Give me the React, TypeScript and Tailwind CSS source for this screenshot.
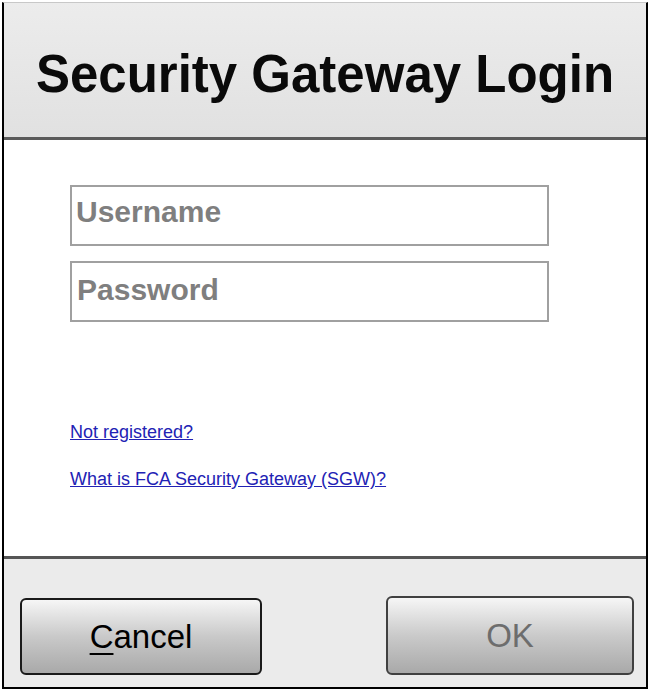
import React, { useState } from "react";

export default function App() {
  const [username, setUsername] = useState("");
  const [password, setPassword] = useState("");

  return (
    <div className="w-[650px] h-[691px] bg-white p-[2px] font-['Liberation_Sans',Arial,sans-serif]">
      <div className="flex flex-col h-full border-l-2 border-r-2 border-b-2 border-t border-l-black border-r-black border-b-black border-t-[#c8c8c8]">
        <div className="h-[137px] flex items-center justify-center bg-gradient-to-b from-[#ececec] to-[#e1e1e1] border-b-[3px] border-[#5a5a5a]">
          <h1 className="text-[51px] font-bold text-[#0a0a0a] leading-none mt-[6px] scale-y-[1.06]">
            Security Gateway Login
          </h1>
        </div>

        <div className="h-[419px] bg-white pt-[45px] pl-[66px] border-b-[3px] border-[#555]">
          <div className="flex flex-col gap-[15px] w-[479px]">
            <input
              type="text"
              placeholder="Username"
              value={username}
              onChange={(e) => setUsername(e.target.value)}
              className="h-[61px] border-2 border-[#a0a0a0] px-[4px] pb-[8px] text-[30px] font-bold text-[#555] placeholder:text-[#7f7f7f] outline-none"
            />
            <input
              type="password"
              placeholder="Password"
              value={password}
              onChange={(e) => setPassword(e.target.value)}
              className="h-[61px] border-2 border-[#a0a0a0] px-[5px] pb-[4px] text-[30px] font-bold text-[#555] placeholder:text-[#7f7f7f] outline-none"
            />
          </div>
          <div className="flex flex-col items-start gap-[27px] mt-[100px] text-[18px] leading-[20px] text-[#2222b4]">
            <a href="#" className="underline">
              Not registered?
            </a>
            <a href="#" className="underline">
              What is FCA Security Gateway (SGW)?
            </a>
          </div>
        </div>

        <div className="flex-1 bg-[#ebebeb] flex items-start justify-between pt-[37px] pl-[16px] pr-[12px]">
          <button className="mt-[2px] w-[242px] h-[77px] rounded-[6px] border-2 border-[#1a1a1a] bg-gradient-to-b from-[#f6f6f6] via-[#c9c9c9] to-[#a9a9a9] text-[33px] text-black">
            <span className="underline underline-offset-[5px] decoration-2">C</span>ancel
          </button>
          <button className="w-[248px] h-[79px] rounded-[6px] border-2 border-[#404040] bg-gradient-to-b from-[#f6f6f6] via-[#cacaca] to-[#a9a9a9] text-[33px] text-[#6d6d6d]">
            OK
          </button>
        </div>
      </div>
    </div>
  );
}
